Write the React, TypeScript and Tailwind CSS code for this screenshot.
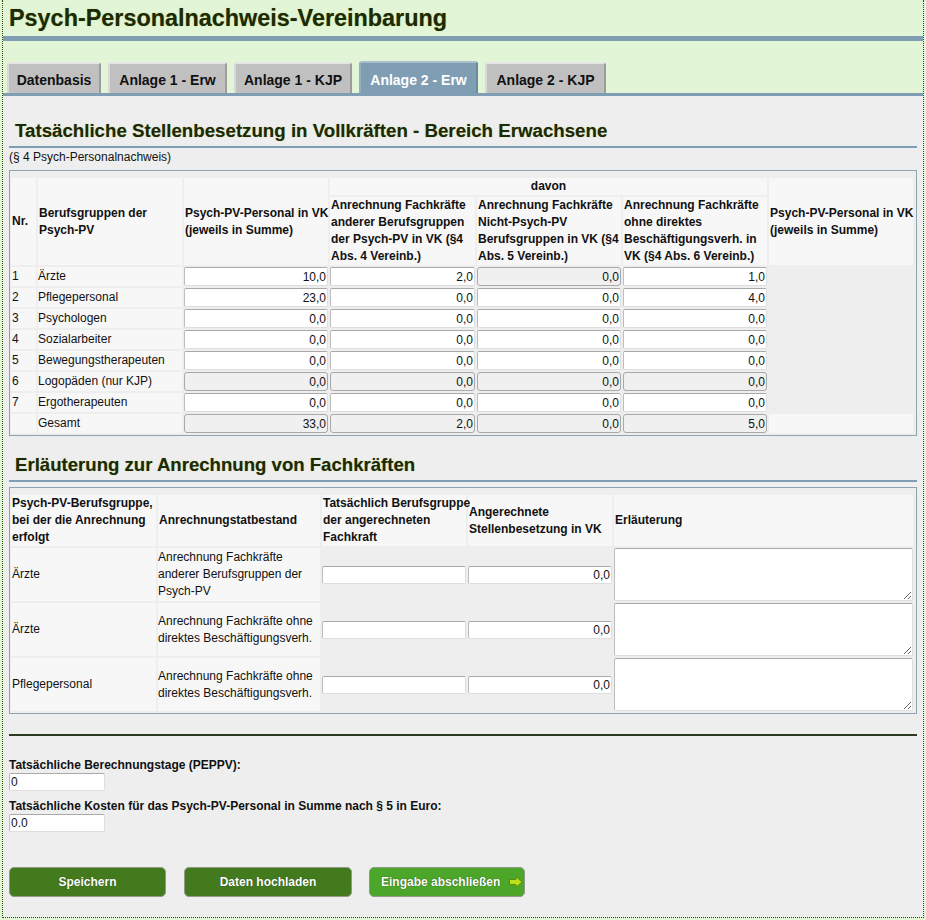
import React from "react";

type Cell = { v: string; d?: boolean };

const inputBase =
  "block w-full h-[19px] text-right pr-[1px] text-[12px] leading-[17px] text-[#111] outline-none rounded-[2px] border";
const enabledCls = "bg-white border-[#dedede] border-t-[#a9a9a9] border-l-[#bdbdbd]";
const disabledCls = "bg-[#f0f0f0] border-[#a9a9a9] rounded-[3px]";

function Num({ c }: { c: Cell }) {
  return (
    <input
      readOnly
      defaultValue={c.v}
      className={`${inputBase} ${c.d ? disabledCls : enabledCls}`}
    />
  );
}

const z = (d?: boolean): Cell => ({ v: "0,0", d });

const rows: { nr: string; name: string; cells: Cell[] }[] = [
  { nr: "1", name: "Ärzte", cells: [{ v: "10,0" }, { v: "2,0" }, { v: "0,0", d: true }, { v: "1,0" }] },
  { nr: "2", name: "Pflegepersonal", cells: [{ v: "23,0" }, z(), z(), { v: "4,0" }] },
  { nr: "3", name: "Psychologen", cells: [z(), z(), z(), z()] },
  { nr: "4", name: "Sozialarbeiter", cells: [z(), z(), z(), z()] },
  { nr: "5", name: "Bewegungstherapeuten", cells: [z(), z(), z(), z()] },
  { nr: "6", name: "Logopäden (nur KJP)", cells: [z(true), z(true), z(true), z(true)] },
  { nr: "7", name: "Ergotherapeuten", cells: [z(), z(), z(), z()] },
];

const gesamt: Cell[] = [
  { v: "33,0", d: true },
  { v: "2,0", d: true },
  { v: "0,0", d: true },
  { v: "5,0", d: true },
];

const tabs = [
  { label: "Datenbasis", w: "w-[94px]" },
  { label: "Anlage 1 - Erw", w: "w-[119px]" },
  { label: "Anlage 1 - KJP", w: "w-[118px]" },
  { label: "Anlage 2 - Erw", w: "w-[119px]", active: true },
  { label: "Anlage 2 - KJP", w: "w-[121px]" },
];

const erl: { grp: string; tat: React.ReactNode }[] = [
  {
    grp: "Ärzte",
    tat: (
      <>
        Anrechnung Fachkräfte
        <br />
        anderer Berufsgruppen der
        <br />
        Psych-PV
      </>
    ),
  },
  {
    grp: "Ärzte",
    tat: (
      <>
        Anrechnung Fachkräfte ohne
        <br />
        direktes Beschäftigungsverh.
      </>
    ),
  },
  {
    grp: "Pflegepersonal",
    tat: (
      <>
        Anrechnung Fachkräfte ohne
        <br />
        direktes Beschäftigungsverh.
      </>
    ),
  },
];

function Arrow() {
  return (
    <svg width="14" height="12" viewBox="0 0 14 12" className="block">
      <path
        d="M0.5 3.5 H7 V0.8 L13.2 6 L7 11.2 V8.5 H0.5 Z"
        fill="#b8e01c"
        stroke="#5d8c08"
        strokeWidth="1"
        strokeLinejoin="round"
      />
    </svg>
  );
}

export default function App() {
  const th1 = "bg-[#f7f7f7] p-0 pl-[1px] text-left align-middle font-bold whitespace-nowrap";
  return (
    <div
      className="w-[926px] h-[920px] bg-[#e2f5d6] pl-[2px] text-[#111]"
      style={{ fontFamily: '"Liberation Sans", Arial, Helvetica, sans-serif' }}
    >
      <div className="w-[922px] h-[918px] border-x border-b border-dotted border-[#2f4a12] flex flex-col">
        {/* Header */}
        <div className="bg-[#e2f5d6]">
          <h1 className="h-[36px] pl-[6px] pt-[5px] text-[23.4px] leading-[26px] font-bold text-[#1c2a06] [text-shadow:0_0_1px_#9aae5a]">
            Psych-Personalnachweis-Vereinbarung
          </h1>
          <div className="h-[5px] bg-[#7f9db3]" />
          <div className="mt-[20px] h-[32px] flex items-end gap-[7px] pl-[4px]">
            {tabs.map((t) => (
              <div
                key={t.label}
                className={`${t.w} ${
                  t.active
                    ? "h-[32px] pt-[9px] bg-[#7f9db3] text-white border-t-[#a9bdcc] border-l-[#95aec1] border-r-[#6d899e]"
                    : "h-[31px] pt-[8px] bg-[#c0c0c0] text-[#111] border-t-[#e6e6e6] border-l-[#d9d9d9] border-r-[#9c9c9c]"
                } rounded-t-[3px] border-t-2 border-l-2 border-r-2 text-center text-[14px] leading-[16px] font-bold whitespace-nowrap`}
              >
                {t.label}
              </div>
            ))}
          </div>
          <div className="h-[3px] bg-[#7f9db3]" />
        </div>

        {/* Content */}
        <div className="flex-1 bg-[#eeeeee] px-[6px] text-[12px]">
          <h2 className="mt-[24px] pl-[6px] text-[18.7px] leading-[21px] font-bold text-[#1c2a06] [text-shadow:0_0_1px_#a8b86a]">
            Tatsächliche Stellenbesetzung in Vollkräften - Bereich Erwachsene
          </h2>
          <div className="mt-[5px] h-[2px] bg-[#7f9db3]" />
          <div className="mt-[2px] leading-[14px]">(§ 4 Psych-Personalnachweis)</div>

          <div className="mt-[6px] border border-[#8ea2b2] pt-[5px]">
            <table className="-ml-[1px] w-[906px] table-fixed border-separate border-spacing-[2px] leading-[1.4] text-[12px]">
              <colgroup>
                <col className="w-[25px]" />
                <col className="w-[144px]" />
                <col className="w-[144px]" />
                <col className="w-[145px]" />
                <col className="w-[144px]" />
                <col className="w-[144px]" />
                <col className="w-[144px]" />
              </colgroup>
              <thead>
                <tr className="h-[17px]">
                  <th rowSpan={2} className={th1}>
                    Nr.
                  </th>
                  <th rowSpan={2} className={th1}>
                    Berufsgruppen der
                    <br />
                    Psych-PV
                  </th>
                  <th rowSpan={2} className={th1}>
                    Psych-PV-Personal in VK
                    <br />
                    (jeweils in Summe)
                  </th>
                  <th colSpan={3} className="bg-[#f7f7f7] p-0 text-center align-middle font-bold">
                    davon
                  </th>
                  <th rowSpan={2} className={th1}>
                    Psych-PV-Personal in VK
                    <br />
                    (jeweils in Summe)
                  </th>
                </tr>
                <tr className="h-[68px]">
                  <th className={th1}>
                    Anrechnung Fachkräfte
                    <br />
                    anderer Berufsgruppen
                    <br />
                    der Psych-PV in VK (§4
                    <br />
                    Abs. 4 Vereinb.)
                  </th>
                  <th className={th1}>
                    Anrechnung Fachkräfte
                    <br />
                    Nicht-Psych-PV
                    <br />
                    Berufsgruppen in VK (§4
                    <br />
                    Abs. 5 Vereinb.)
                  </th>
                  <th className={th1}>
                    Anrechnung Fachkräfte
                    <br />
                    ohne direktes
                    <br />
                    Beschäftigungsverh. in
                    <br />
                    VK (§4 Abs. 6 Vereinb.)
                  </th>
                </tr>
              </thead>
              <tbody>
                {rows.map((r) => (
                  <tr key={r.nr} className="h-[19px]">
                    <td className="bg-[#f7f7f7] p-0 pl-[1px] align-middle">{r.nr}</td>
                    <td className="bg-[#f7f7f7] p-0 align-middle whitespace-nowrap">{r.name}</td>
                    {r.cells.map((c, i) => (
                      <td key={i} className="p-0 align-middle">
                        <Num c={c} />
                      </td>
                    ))}
                    <td className="p-0" />
                  </tr>
                ))}
                <tr className="h-[19px]">
                  <td className="bg-[#f7f7f7] p-0" />
                  <td className="bg-[#f7f7f7] p-0 align-middle">Gesamt</td>
                  {gesamt.map((c, i) => (
                    <td key={i} className="p-0 align-middle">
                      <Num c={c} />
                    </td>
                  ))}
                  <td className="bg-[#f7f7f7] p-0" />
                </tr>
              </tbody>
            </table>
          </div>

          <h2 className="mt-[18px] pl-[6px] text-[18.6px] leading-[21px] font-bold text-[#1c2a06] [text-shadow:0_0_1px_#a8b86a]">
            Erläuterung zur Anrechnung von Fachkräften
          </h2>
          <div className="mt-[5px] h-[2px] bg-[#7f9db3]" />

          <div className="mt-[5px] border border-[#8ea2b2] pt-[5px]">
            <table className="-ml-[1px] w-[906px] table-fixed border-separate border-spacing-[2px] leading-[17px] text-[12px]">
              <colgroup>
                <col className="w-[145px]" />
                <col className="w-[162px]" />
                <col className="w-[144px]" />
                <col className="w-[144px]" />
                <col className="w-[299px]" />
              </colgroup>
              <thead>
                <tr className="h-[51px]">
                  <th className={th1}>
                    Psych-PV-Berufsgruppe,
                    <br />
                    bei der die Anrechnung
                    <br />
                    erfolgt
                  </th>
                  <th className={th1}>Anrechnungstatbestand</th>
                  <th className={th1}>
                    Tatsächlich Berufsgruppe
                    <br />
                    der angerechneten
                    <br />
                    Fachkraft
                  </th>
                  <th className={th1}>
                    Angerechnete
                    <br />
                    Stellenbesetzung in VK
                  </th>
                  <th className={th1}>Erläuterung</th>
                </tr>
              </thead>
              <tbody>
                {erl.map((r, i) => (
                  <tr key={i} className="h-[53px]">
                    <td className="bg-[#f7f7f7] p-0 pl-[1px] align-middle whitespace-nowrap">{r.grp}</td>
                    <td className="bg-[#f7f7f7] p-0 align-middle whitespace-nowrap">{r.tat}</td>
                    <td className="p-0 align-middle">
                      <input
                        readOnly
                        defaultValue=""
                        className={`block w-full h-[18px] text-[12px] outline-none rounded-[2px] border ${enabledCls}`}
                      />
                    </td>
                    <td className="p-0 align-middle">
                      <input
                        readOnly
                        defaultValue="0,0"
                        className={`block w-full h-[18px] text-right pr-[1px] text-[12px] leading-[16px] outline-none rounded-[2px] border ${enabledCls}`}
                      />
                    </td>
                    <td className="p-0 align-middle">
                      <textarea
                        readOnly
                        className={`block w-full h-[53px] outline-none rounded-[2px] border resize-y ${enabledCls}`}
                      />
                    </td>
                  </tr>
                ))}
              </tbody>
            </table>
          </div>

          <div className="mt-[20px] h-[2px] bg-[#2c3a1f]" />

          <div className="mt-[22px] font-bold leading-[14px]">Tatsächliche Berechnungstage (PEPPV):</div>
          <input
            readOnly
            defaultValue="0"
            className={`mt-[1px] block w-[96px] h-[18px] pl-[1px] text-[12px] outline-none rounded-[2px] border ${enabledCls}`}
          />
          <div className="mt-[8px] font-bold leading-[14px]">
            Tatsächliche Kosten für das Psych-PV-Personal in Summe nach § 5 in Euro:
          </div>
          <input
            readOnly
            defaultValue="0.0"
            className={`mt-[1px] block w-[96px] h-[18px] pl-[1px] text-[12px] outline-none rounded-[2px] border ${enabledCls}`}
          />

          <div className="mt-[35px] flex">
            <button className="w-[157px] h-[30px] rounded-[5px] border border-[#8f9a88] bg-[#437a1e] text-white font-bold text-[12px] [text-shadow:0_0_1px_#1d3a08]">
              Speichern
            </button>
            <button className="ml-[18px] w-[168px] h-[30px] rounded-[5px] border border-[#8f9a88] bg-[#437a1e] text-white font-bold text-[12px] [text-shadow:0_0_1px_#1d3a08]">
              Daten hochladen
            </button>
            <button className="ml-[17px] w-[156px] h-[30px] rounded-[5px] border border-[#8f9a88] bg-[#4ba62a] text-white font-bold text-[12px] flex items-center pl-[11px] gap-[9px] [text-shadow:0_0_1px_#1d3a08]">
              <span>Eingabe abschließen</span>
              <Arrow />
            </button>
          </div>
        </div>
      </div>
    </div>
  );
}
